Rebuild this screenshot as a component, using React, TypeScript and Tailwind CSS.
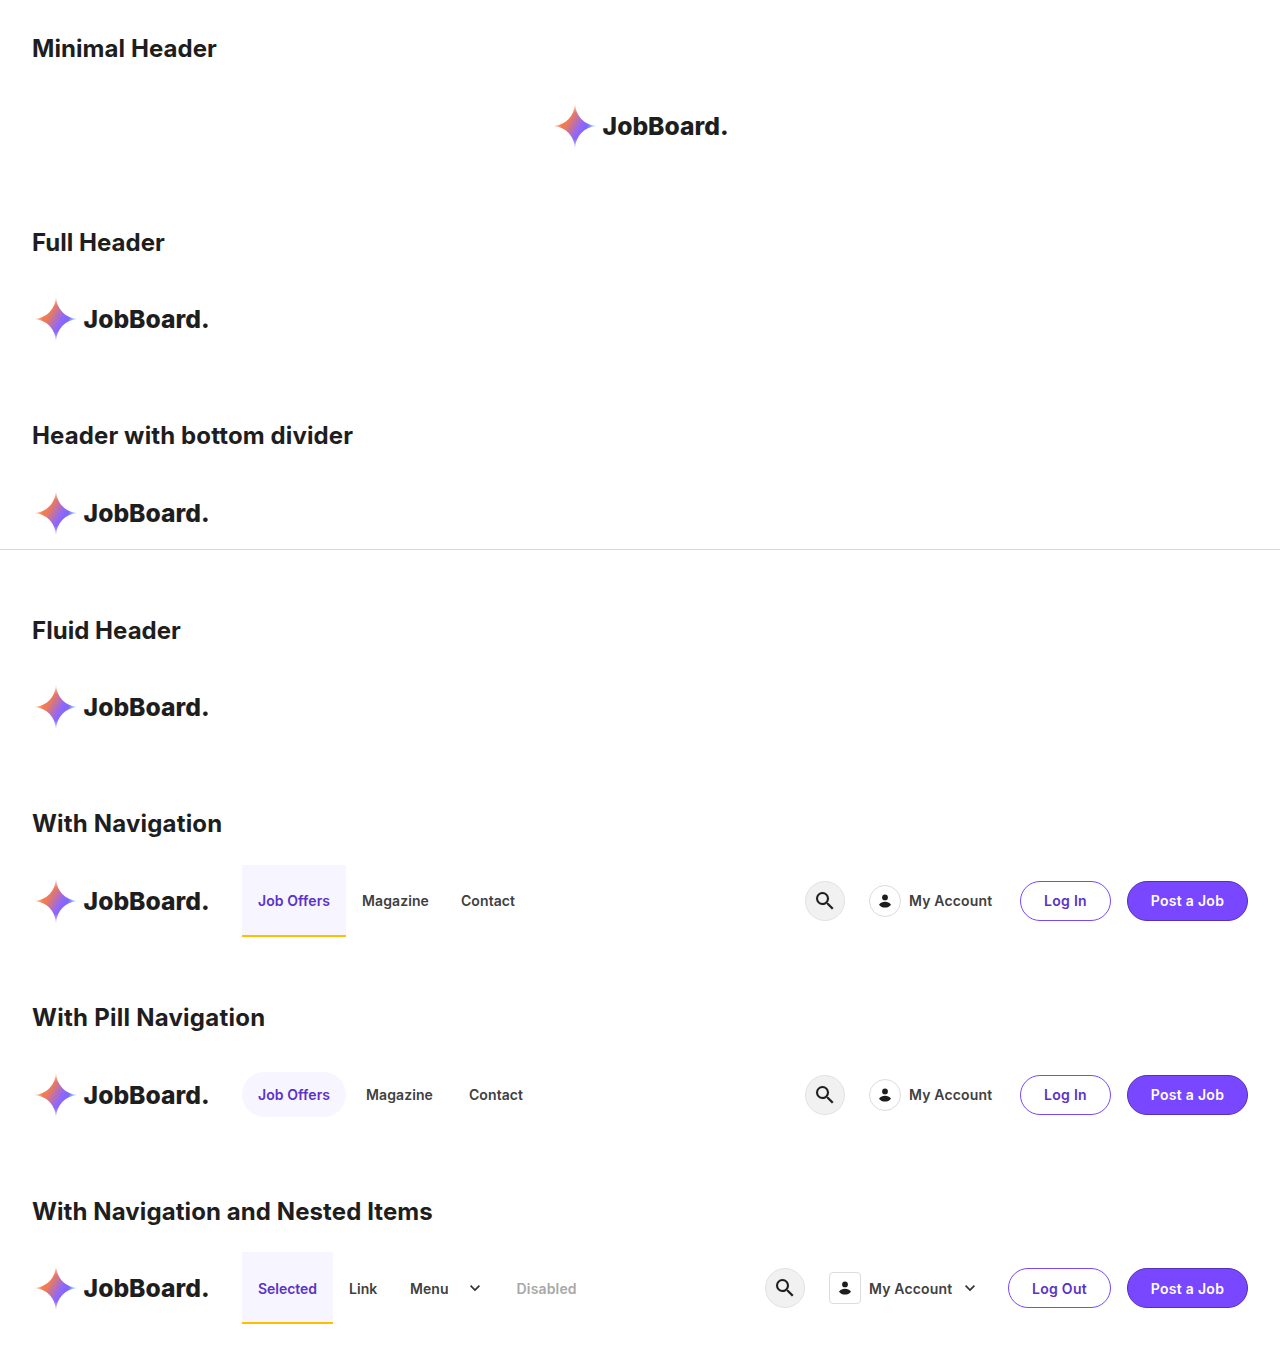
import type { ReactNode } from 'react';

function Logo() {
  return (
    <svg className="h-14 w-[178px] shrink-0 overflow-visible" viewBox="0 0 178 56" role="img" aria-label="JobBoard.">
      <defs>
        <linearGradient id="star" gradientUnits="userSpaceOnUse" x1="10" y1="19" x2="39" y2="36">
          <stop offset="0" stopColor="#ff7a3d" />
          <stop offset="0.25" stopColor="#ee7a58" />
          <stop offset="0.64" stopColor="#9068f8" />
          <stop offset="0.8" stopColor="#8066ff" />
          <stop offset="1" stopColor="#5cb8ec" />
        </linearGradient>
        <radialGradient id="fade" gradientUnits="userSpaceOnUse" cx="24" cy="28" r="22">
          <stop offset="0.6" stopColor="#fff" />
          <stop offset="1" stopColor="#fff" stopOpacity="0.25" />
        </radialGradient>
        <mask id="tips" maskUnits="userSpaceOnUse" x="0" y="0" width="48" height="56">
          <rect width="48" height="56" fill="url(#fade)" />
        </mask>
      </defs>
      <path
        d="M24 5.5C24.7 18 33 27 45.5 28C33 29 24.7 38 24 50.5C23.3 38 15 29 2.5 28C15 27 23.3 18 24 5.5Z"
        fill="url(#star)"
        mask="url(#tips)"
      />
      <text
        x="51.6"
        y="37.1"
        textLength="126"
        lengthAdjust="spacingAndGlyphs"
        className="fill-[#1e1e1e] font-['Inter',sans-serif] text-[24.7px] font-extrabold"
      >
        JobBoard.
      </text>
    </svg>
  );
}

function Chevron() {
  return (
    <svg className="size-6 shrink-0" viewBox="0 0 24 24" fill="none" stroke="#333" strokeWidth="1.7" aria-hidden="true">
      <path d="M7.6 9.7 12 14.1l4.4-4.4" />
    </svg>
  );
}

function Search() {
  return (
    <button className="flex size-10 items-center justify-center rounded-full border border-[#e2e2e2] bg-[#f1f1f1]" aria-label="Search">
      <svg className="size-6" viewBox="0 0 24 24" fill="#1e1e1e" stroke="#1e1e1e" strokeWidth="0.1" aria-hidden="true">
        <path d="M15.5 14h-.79l-.28-.27A6.471 6.471 0 0 0 16 9.5 6.5 6.5 0 1 0 9.5 16c1.61 0 3.09-.59 4.23-1.57l.27.28v.79l5 4.99L20.49 19l-4.99-5zm-6 0C7.01 14 5 11.99 5 9.5S7.01 5 9.5 5 14 7.01 14 9.5 11.99 14 9.5 14z" />
      </svg>
    </button>
  );
}

function Account({ nested }: { nested?: boolean }) {
  return (
    <div className="flex items-center">
      <span
        className={`mr-2 flex size-8 items-center justify-center border border-[#dcdcdc] bg-white ${nested ? 'rounded' : 'rounded-full'}`}
      >
        <svg className="size-4" viewBox="0 0 16 16" fill="#1e1e1e" aria-hidden="true">
          <circle cx="8" cy="4.4" r="2.9" />
          <path d="M2 11.7C3.6 9.7 5.6 8.8 8 8.8s4.4.9 6 2.9C12.4 13.7 10.4 14.6 8 14.6s-4.4-.9-6-2.9z" />
        </svg>
      </span>
      <span className="w-[83px] whitespace-nowrap tracking-[0.17px]">My Account</span>
      {nested && (
        <span className="ml-1.5 mr-0.5">
          <Chevron />
        </span>
      )}
    </div>
  );
}

function Actions({ nested }: { nested?: boolean }) {
  return (
    <div className="ml-auto flex items-center tracking-[0.28px]">
      <Search />
      <div className={nested ? 'ml-6 mr-6' : 'ml-6 mr-7'}>
        <Account nested={nested} />
      </div>
      <button
        className={`mr-4 h-10 rounded-full border border-[#7847ff] text-[#5a32c8] ${nested ? 'w-[103px]' : 'w-[91px]'}`}
      >
        {nested ? 'Log Out' : 'Log In'}
      </button>
      <button className="h-10 w-[121px] rounded-full border border-[#5431b8] bg-[#7847ff] text-white">Post a Job</button>
    </div>
  );
}

function Tab({ children, selected }: { children: ReactNode; selected?: boolean }) {
  return (
    <a
      className={`flex h-full items-center border-y-2 px-4 ${
        selected ? 'border-b-[#ffbf00] border-t-[#f7f5ff] bg-[#f7f5ff] text-[#5a32c8]' : 'border-transparent'
      }`}
    >
      {children}
    </a>
  );
}

function Pill({ children, selected }: { children: ReactNode; selected?: boolean }) {
  return (
    <a className={`flex h-[45px] items-center rounded-full px-4 ${selected ? 'bg-[#f7f5ff] text-[#5a32c8]' : ''}`}>
      {children}
    </a>
  );
}

type SectionProps = {
  title: string;
  tracking: string;
  children?: ReactNode;
  divider?: boolean;
  center?: boolean;
};

function Section({ title, tracking, children, divider, center }: SectionProps) {
  return (
    <section className="py-8">
      <h2 className={`mb-6 px-8 text-[24px] leading-[33.6px] font-bold text-[#1e1e1e] ${tracking}`}>{title}</h2>
      <header
        className={`box-content flex h-[72px] items-center px-8 ${divider ? 'border-b border-[#d9d9d9]' : ''} ${center ? 'justify-center' : ''}`}
      >
        <Logo />
        {children}
      </header>
    </section>
  );
}

export default function App() {
  return (
    <main className="bg-white font-['Inter',sans-serif] text-[14px] leading-[21px] font-semibold text-[#404040]">
      <Section title="Minimal Header" tracking="tracking-[0.07px]" center />
      <Section title="Full Header" tracking="tracking-[0.03px]" />
      <Section title="Header with bottom divider" tracking="tracking-[0.12px]" divider />
      <Section title="Fluid Header" tracking="tracking-[0.04px]" />
      <Section title="With Navigation" tracking="tracking-[0.18px]">
        <nav className="ml-8 flex h-full tracking-[0.09px]">
          <Tab selected>Job Offers</Tab>
          <Tab>Magazine</Tab>
          <Tab>Contact</Tab>
        </nav>
        <Actions />
      </Section>
      <Section title="With Pill Navigation" tracking="tracking-[0.25px]">
        <nav className="ml-8 flex gap-1 tracking-[0.09px]">
          <Pill selected>Job Offers</Pill>
          <Pill>Magazine</Pill>
          <Pill>Contact</Pill>
        </nav>
        <Actions />
      </Section>
      <Section title="With Navigation and Nested Items" tracking="tracking-[0.09px]">
        <nav className="ml-8 flex h-full tracking-[0.07px]">
          <Tab selected>
            <span className="w-[59px] tracking-[-0.05px]">Selected</span>
          </Tab>
          <Tab>
            <span className="w-[29px]">Link</span>
          </Tab>
          <Tab>
            Menu
            <span className="ml-3.5 -mr-0.5">
              <Chevron />
            </span>
          </Tab>
          <Tab>
            <span className="tracking-[0.15px] text-[#a8a8a8]">Disabled</span>
          </Tab>
        </nav>
        <Actions nested />
      </Section>
    </main>
  );
}
